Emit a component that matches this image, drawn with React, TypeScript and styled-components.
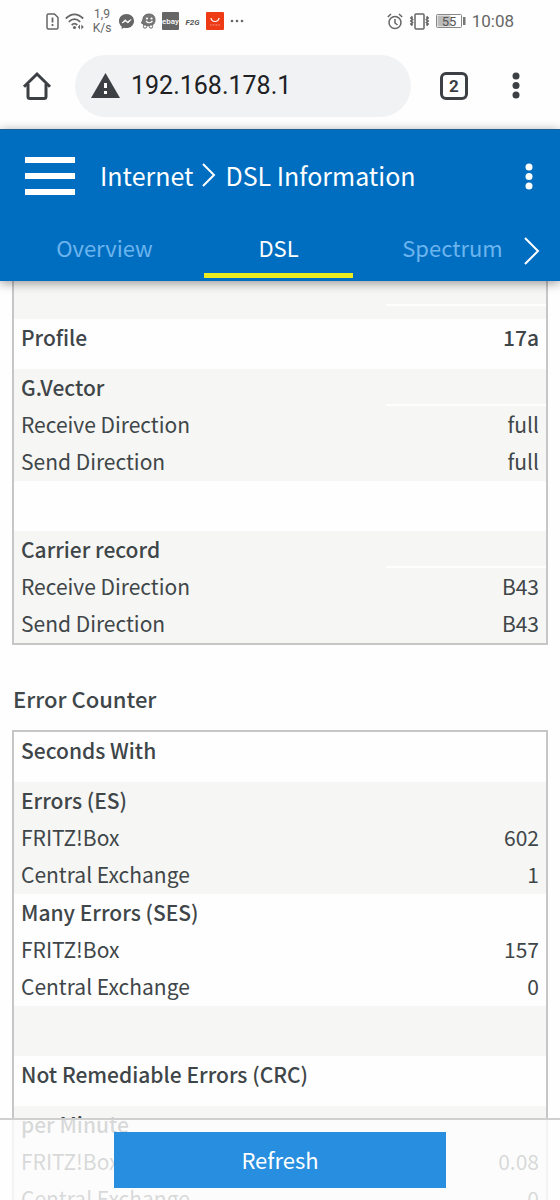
import React from 'react';
import styled, { createGlobalStyle, css } from 'styled-components';

const Global = createGlobalStyle`
  * { box-sizing: border-box; }
  html, body { margin: 0; background: #fefefe; }
  button { font: inherit; color: inherit; border: 0; background: none; padding: 0; margin: 0; }
  a { color: inherit; text-decoration: none; }
  h1, h2 { margin: 0; font: inherit; }
  svg { display: block; flex: none; }
`;

const Screen = styled.div`
  position: relative;
  display: flex;
  flex-direction: column;
  height: 100vh;
  overflow: hidden;
  background: #fefefe;
  color: #3f4649;
  font-family: "Noto Sans CJK JP", "Noto Sans", sans-serif;
  font-size: 22px;
`;

const StatusBar = styled.div`
  display: flex;
  align-items: center;
  justify-content: space-between;
  flex: none;
  height: 42px;
  padding: 0 46px;
  color: #666;
  font-family: Roboto, sans-serif;
`;

const StatusGroup = styled.div`
  display: flex;
  align-items: center;
  gap: 6px;
`;

const NetSpeed = styled.div`
  width: 22px;
  font-size: 12px;
  line-height: 14px;
  text-align: center;
`;

const Clock = styled.span`
  font-size: 17px;
`;

const BrowserBar = styled.div`
  display: flex;
  align-items: center;
  flex: none;
  height: 87px;
  padding: 0 40px 0 22px;
  color: #3c3f43;
  font-family: Roboto, sans-serif;
`;

const AddressBox = styled.label`
  display: flex;
  align-items: center;
  gap: 11px;
  flex: 1;
  min-width: 0;
  height: 62px;
  margin: 0 29px 0 23px;
  padding: 0 16px;
  border-radius: 31px;
  background: #f1f2f4;
`;

const AddressInput = styled.input`
  flex: 1;
  min-width: 0;
  padding: 0;
  border: 0;
  outline: 0;
  background: none;
  color: #202124;
  font: 25px Roboto, sans-serif;
`;

const TabCount = styled.button`
  width: 28px;
  height: 28px;
  margin-right: 44px;
  border: 3px solid #3c3f43;
  border-radius: 6px;
  font-size: 17px;
  font-weight: 700;
  line-height: 22px;
`;

const AppHeader = styled.header`
  position: relative;
  z-index: 1;
  flex: none;
  height: 152px;
  background: #006ec0;
  color: #fff;
  box-shadow: inset 0 1px 0 #1f5f93, 0 2px 10px rgba(0, 0, 0, 0.4);
`;

const TitleRow = styled.div`
  display: flex;
  align-items: center;
  height: 94px;
  padding: 0 27px 0 25px;
`;

const Breadcrumb = styled.nav`
  display: flex;
  align-items: center;
  gap: 9px;
  flex: 1;
  margin-left: 25px;
  padding-bottom: 3px;
  font-size: 25px;
  line-height: 36px;
`;

const TabRow = styled.nav`
  position: relative;
  display: flex;
  gap: 25px;
  height: 55px;
  padding-left: 30px;
`;

const Tab = styled.a<{ $active?: boolean }>`
  flex: 0 0 149px;
  border-bottom: 5px solid ${(p) => (p.$active ? '#ebeb20' : 'transparent')};
  color: ${(p) => (p.$active ? '#fff' : '#6cb4ee')};
  line-height: 48px;
  text-align: center;
`;

const NextTabs = styled.button`
  position: absolute;
  top: 0;
  right: 20px;
  width: 16px;
  height: 55px;
`;

const Content = styled.main`
  flex: 1;
  min-height: 0;
  overflow: hidden;
  padding: 0 12px;
`;

const DataTable = styled.table<{ $continued?: boolean }>`
  width: 100%;
  table-layout: fixed;
  border: 2px solid #c6c6c6;
  border-collapse: separate;
  border-spacing: 0;
  font-size: 21px;
  ${(p) => p.$continued && css`border-top: 0;`}
`;

type RowKind = 'head' | 'tall' | 'item' | 'last' | 'rest' | 'gap';
const rowHeight = { head: 37, tall: 50, item: 37, last: 38, rest: 25, gap: 13 };

const Row = styled.tr<{ $kind: RowKind; $shaded?: boolean }>`
  height: ${(p) => rowHeight[p.$kind]}px;
  background: ${(p) => (p.$shaded ? '#f6f6f4' : '#fefefe')};
  font-weight: ${(p) => (p.$kind === 'head' || p.$kind === 'tall' ? 500 : 400)};
`;

const Label = styled.th`
  width: 70%;
  padding: 0 7px;
  font-weight: inherit;
  line-height: 36px;
  text-align: left;
  vertical-align: top;
  white-space: nowrap;
`;

const Value = styled.td<{ $ruled?: boolean }>`
  padding: 0 7px;
  line-height: 36px;
  text-align: right;
  vertical-align: top;
  ${(p) => p.$ruled && css`border-bottom: 2px solid #fefefe;`}
`;

const SectionTitle = styled.h2`
  padding: 36px 1px 15px;
  font-weight: 500;
  line-height: 34px;
`;

const Footer = styled.footer`
  position: absolute;
  inset: auto 0 0;
  z-index: 1;
  display: flex;
  justify-content: center;
  padding: 12px;
  border-top: 2px solid #cfcfcf;
  background: rgba(254, 254, 254, 0.8);
`;

const RefreshButton = styled.button`
  width: 332px;
  max-width: 100%;
  height: 56px;
  padding-bottom: 3px;
  background: #278ee0;
  color: #fff;
`;

type RowData = { kind: RowKind; label?: string; value?: string; shaded?: boolean; ruled?: boolean };

const lineRows: RowData[] = [
  { kind: 'rest', shaded: true, ruled: true },
  { kind: 'gap', shaded: true },
  { kind: 'tall', label: 'Profile', value: '17a' },
  { kind: 'head', label: 'G.Vector', shaded: true, ruled: true },
  { kind: 'item', label: 'Receive Direction', value: 'full', shaded: true },
  { kind: 'last', label: 'Send Direction', value: 'full', shaded: true },
  { kind: 'tall' },
  { kind: 'head', label: 'Carrier record', shaded: true, ruled: true },
  { kind: 'item', label: 'Receive Direction', value: 'B43', shaded: true },
  { kind: 'last', label: 'Send Direction', value: 'B43', shaded: true },
];

const errorRows: RowData[] = [
  { kind: 'tall', label: 'Seconds With' },
  { kind: 'head', label: 'Errors (ES)', shaded: true },
  { kind: 'item', label: 'FRITZ!Box', value: '602', shaded: true },
  { kind: 'last', label: 'Central Exchange', value: '1', shaded: true },
  { kind: 'head', label: 'Many Errors (SES)' },
  { kind: 'item', label: 'FRITZ!Box', value: '157' },
  { kind: 'last', label: 'Central Exchange', value: '0' },
  { kind: 'tall', shaded: true },
  { kind: 'tall', label: 'Not Remediable Errors (CRC)' },
  { kind: 'head', label: 'per Minute', shaded: true },
  { kind: 'item', label: 'FRITZ!Box', value: '0.08', shaded: true },
  { kind: 'last', label: 'Central Exchange', value: '0', shaded: true },
];

const Rows = ({ rows }: { rows: RowData[] }) => (
  <tbody>
    {rows.map((r, i) => (
      <Row key={i} $kind={r.kind} $shaded={r.shaded}>
        <Label scope="row">{r.label}</Label>
        <Value $ruled={r.ruled}>{r.value}</Value>
      </Row>
    ))}
  </tbody>
);

const Dots = ({ r = 3, gap = 9 }: { r?: number; gap?: number }) => (
  <svg width={r * 2 + 1} height={gap * 2 + r * 2 + 1} fill="currentColor">
    {[0, 1, 2].map((i) => <circle key={i} cx={r + 0.5} cy={r + 0.5 + i * gap} r={r} />)}
  </svg>
);

const SimAlert = () => (
  <svg width="13" height="17" viewBox="0 0 13 17" fill="none" stroke="currentColor" strokeWidth="1.5">
    <path d="M1 2.5Q1 1 2.500 1H8.500L12 4.500V14.500Q12 16 10.500 16H2.500Q1 16 1 14.500Z" />
    <path d="M6.500 4.500V9.500M6.500 11V13" strokeWidth="1.800" />
  </svg>
);

const Wifi = () => (
  <svg width="20" height="17" viewBox="0 0 20 17" fill="none" stroke="currentColor" strokeWidth="1.800">
    <path d="M.8 5.500Q9.500-2.800 18.200 5.500M3.800 8.800Q9.500 3.500 15.200 8.800M6.700 12Q9.500 9.300 12.300 12" />
    <circle cx="9.500" cy="14.500" r="1.600" fill="currentColor" stroke="none" />
    <path d="M15 11.500V16.500L12.800 14ZM16.300 11.500V16.500L18.800 14Z" fill="currentColor" stroke="none" />
  </svg>
);

const Messenger = () => (
  <svg width="15" height="15" viewBox="0 0 15 15">
    <path d="M7.500 0C3.200 0 0 3 0 7C0 9.300 1 11.200 2.700 12.500V15L5 13.800C10.600 15.200 15 11.700 15 7C15 3 11.800 0 7.500 0Z" fill="#666" />
    <path d="M3 9L6 5.700L8.500 7.800L12 5.500L9 9L6.600 7.200Z" fill="#fff" stroke="#fff" strokeWidth=".8" />
  </svg>
);

const Waze = () => (
  <svg width="16" height="16" viewBox="0 0 16 16">
    <path d="M1 9.500Q2.800 9.500 2.800 6.500Q3.500 1 9 1Q15 1 15 7Q15 12.500 9 12.800Q4 13 1 9.500Z" fill="#777" stroke="#666" />
    <circle cx="7" cy="5.500" r="1.100" fill="#fff" />
    <circle cx="11.500" cy="5.500" r="1.100" fill="#fff" />
    <path d="M6 8Q9 11.500 12.500 8" fill="none" stroke="#fff" strokeWidth="1.200" />
    <circle cx="5" cy="13.500" r="1.700" fill="#fff" stroke="#666" />
    <circle cx="11" cy="13.500" r="1.700" fill="#fff" stroke="#666" />
  </svg>
);

const Ebay = () => (
  <svg width="17" height="18" viewBox="0 0 17 18">
    <rect width="17" height="18" rx="1" fill="#666" />
    <text x="8.500" y="11.500" fill="#fff" fontSize="8" fontWeight="500" textAnchor="middle" fontFamily="Roboto, sans-serif">ebay</text>
  </svg>
);

const F2G = () => (
  <svg width="15" height="12" viewBox="0 0 15 12">
    <text x="7.500" y="9.500" fill="#555" fontSize="8" fontWeight="700" fontStyle="italic" textAnchor="middle" fontFamily="Roboto, sans-serif">F2G</text>
  </svg>
);

const ShopApp = () => (
  <svg width="18" height="18" viewBox="0 0 18 18" fill="none" stroke="#fff">
    <rect width="18" height="18" rx="1" fill="#ee3b16" stroke="none" />
    <path d="M5 6Q5.500 9.500 9 9.500Q12.500 9.500 13 6" strokeWidth="1.200" />
    <path d="M4 13H14" strokeWidth=".8" strokeDasharray="1 .5" opacity=".6" />
  </svg>
);

const More = () => (
  <svg width="14" height="4" fill="currentColor">
    <circle cx="2" cy="2" r="1.300" /><circle cx="7" cy="2" r="1.300" /><circle cx="12" cy="2" r="1.300" />
  </svg>
);

const Alarm = () => (
  <svg width="16" height="17" viewBox="0 0 16 17" fill="none" stroke="currentColor" strokeWidth="1.500">
    <circle cx="8" cy="9.500" r="6" /><path d="M8 6V10L10.500 12M.8 4L4 1M15.200 4L12 1" />
  </svg>
);

const Vibrate = () => (
  <svg width="21" height="17" viewBox="0 0 21 17" fill="none" stroke="currentColor" strokeWidth="1.500">
    <rect x="6" y="1" width="9" height="15" rx="1" />
    <path d="M3.500 3.500L2 5L3.500 6.500L2 8L3.500 9.500L2 11L3.500 12.500M17.500 3.500L19 5L17.500 6.500L19 8L17.500 9.500L19 11L17.500 12.500" strokeWidth="1.800" />
  </svg>
);

const Battery = () => (
  <svg width="30" height="14" viewBox="0 0 30 14">
    <rect x=".5" y=".5" width="25" height="13" rx="1" fill="#fff" stroke="#888" />
    <rect x="1.500" y="1.500" width="13" height="11" fill="#bbb" />
    <rect x="27" y="3" width="2.500" height="8" fill="#777" />
    <text x="13" y="11.500" fontSize="13" textAnchor="middle" fill="#555" fontFamily="Roboto, sans-serif">55</text>
  </svg>
);

const Home = () => (
  <svg width="30" height="30" viewBox="0 0 30 30" fill="none" stroke="currentColor" strokeWidth="3">
    <path d="M2 15.800L15 3L28 15.800" />
    <path d="M6 13V25.500Q6 27.500 8 27.500H22Q24 27.500 24 25.500V13" />
  </svg>
);

const Warning = () => (
  <svg width="29" height="25" viewBox="0 0 29 25">
    <path d="M14.500 0L29 25H0Z" fill="#3c3f43" />
    <path d="M14.500 10V15M14.500 18V21" stroke="#fff" strokeWidth="3" />
  </svg>
);

const MenuBars = () => (
  <svg width="50" height="38" fill="#fff">
    <rect width="50" height="6" /><rect y="16" width="50" height="6" /><rect y="32" width="50" height="6" />
  </svg>
);

const Chevron = ({ w, h }: { w: number; h: number }) => (
  <svg width={w} height={h} fill="none" stroke="#fff" strokeWidth="2">
    <path d={`M1 1L${w - 2} ${h / 2}L1 ${h - 1}`} />
  </svg>
);

export default function App() {
  return (
    <Screen>
      <Global />
      <StatusBar>
        <StatusGroup>
          <SimAlert /><Wifi />
          <NetSpeed>1,9<br />K/s</NetSpeed>
          <Messenger /><Waze /><Ebay /><F2G /><ShopApp /><More />
        </StatusGroup>
        <StatusGroup>
          <Alarm /><Vibrate /><Battery />
          <Clock>10:08</Clock>
        </StatusGroup>
      </StatusBar>
      <BrowserBar>
        <button aria-label="Home"><Home /></button>
        <AddressBox>
          <Warning />
          <AddressInput aria-label="Address" defaultValue="192.168.178.1" />
        </AddressBox>
        <TabCount aria-label="Open tabs">2</TabCount>
        <button aria-label="Browser menu"><Dots r={3.5} gap={9.5} /></button>
      </BrowserBar>
      <AppHeader>
        <TitleRow>
          <button aria-label="Menu"><MenuBars /></button>
          <Breadcrumb>
            <a href="#internet">Internet</a>
            <Chevron w={14} h={24} />
            <h1>DSL Information</h1>
          </Breadcrumb>
          <button aria-label="More"><Dots r={3.5} gap={9.5} /></button>
        </TitleRow>
        <TabRow>
          <Tab href="#overview">Overview</Tab>
          <Tab href="#dsl" $active>DSL</Tab>
          <Tab href="#spectrum">Spectrum</Tab>
          <NextTabs aria-label="More tabs"><Chevron w={16} h={28} /></NextTabs>
        </TabRow>
      </AppHeader>
      <Content>
        <DataTable $continued><Rows rows={lineRows} /></DataTable>
        <SectionTitle>Error Counter</SectionTitle>
        <DataTable><Rows rows={errorRows} /></DataTable>
      </Content>
      <Footer>
        <RefreshButton>Refresh</RefreshButton>
      </Footer>
    </Screen>
  );
}
